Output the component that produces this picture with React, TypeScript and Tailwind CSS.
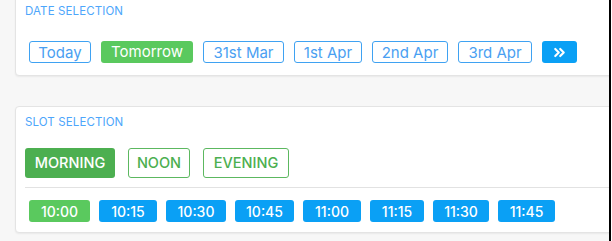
import { ChevronsRight } from "lucide-react";

const dates = [
  { label: "Today", w: "w-[62px]", active: false },
  { label: "Tomorrow", w: "w-[92px]", active: true },
  { label: "31st Mar", w: "w-[81px]", active: false },
  { label: "1st Apr", w: "w-[68px]", active: false },
  { label: "2nd Apr", w: "w-[76px]", active: false },
  { label: "3rd Apr", w: "w-[74px]", active: false },
];

const periods = [
  { label: "MORNING", w: "w-[90px]", active: true },
  { label: "NOON", w: "w-[62px]", active: false },
  { label: "EVENING", w: "w-[86px]", active: false },
];

const slots = [
  { label: "10:00", w: "w-[61px]", active: true },
  { label: "10:15", w: "w-[58px]", active: false },
  { label: "10:30", w: "w-[60px]", active: false },
  { label: "10:45", w: "w-[59px]", active: false },
  { label: "11:00", w: "w-[58px]", active: false },
  { label: "11:15", w: "w-[54px]", active: false },
  { label: "11:30", w: "w-[56px]", active: false },
  { label: "11:45", w: "w-[57px]", active: false },
];

export default function App() {
  return (
    <div className="flex h-[241px] w-[612px] overflow-hidden bg-[#f7f7f7] font-['Inter',sans-serif]">
      <div className="flex-1 overflow-hidden pl-[15px]">
        {/* date card */}
        <div className="-mr-[10px] mt-[-10px] rounded-[4px] border border-[#e4e4e4] bg-white pb-[12px] pl-[9px] pt-[13px] shadow-[0_1px_2px_rgba(0,0,0,0.06)]">
          <p className="text-[11.5px] leading-[14px] tracking-[0.01em] text-[#4da6fb]">DATE SELECTION</p>
          <div className="mt-[23px] flex gap-[10px] pl-[4px]">
            {dates.map((d) => (
              <button
                key={d.label}
                className={
                  d.active
                    ? `${d.w} h-[22px] rounded-[3px] bg-[#5ac95e] text-[15px] text-white`
                    : `${d.w} h-[22px] rounded-[3px] border border-[#3fa2f2] bg-white text-[15px] text-[#4a9ff2]`
                }
              >
                {d.label}
              </button>
            ))}
            <button className="flex h-[22px] w-[35px] items-center justify-center rounded-[3px] bg-[#0aa0f5] text-white">
              <ChevronsRight size={17} strokeWidth={3} />
            </button>
          </div>
        </div>

        {/* slot card */}
        <div className="-mr-[10px] mt-[30px] rounded-[4px] border border-[#e4e4e4] bg-white pb-[10px] pl-[9px] pt-[8px] shadow-[0_1px_2px_rgba(0,0,0,0.06)]">
          <p className="text-[11.5px] leading-[14px] tracking-[0.01em] text-[#4da6fb]">SLOT SELECTION</p>
          <div className="mt-[19px] flex gap-[13px]">
            {periods.map((p) => (
              <button
                key={p.label}
                className={
                  p.active
                    ? `${p.w} h-[30px] rounded-[3px] bg-[#4caf50] text-[14.5px] font-medium text-white`
                    : `${p.w} h-[30px] rounded-[3px] border border-[#5cb860] bg-white text-[14.5px] font-medium text-[#4caf50]`
                }
              >
                {p.label}
              </button>
            ))}
          </div>
          <div className="mt-[9px] h-px bg-[#e2e2e2]" />
          <div className="mt-[12px] flex gap-[9px] pl-[4px]">
            {slots.map((s) => (
              <button
                key={s.label}
                className={
                  s.active
                    ? `${s.w} h-[22px] rounded-[3px] bg-[#5ac95e] text-[14px] font-medium text-white`
                    : `${s.w} h-[22px] rounded-[3px] bg-[#0aa0f5] text-[14px] font-medium text-white`
                }
              >
                {s.label}
              </button>
            ))}
          </div>
        </div>
      </div>
      <div className="w-[2px] bg-black" />
      <div className="w-px bg-white" />
    </div>
  );
}
